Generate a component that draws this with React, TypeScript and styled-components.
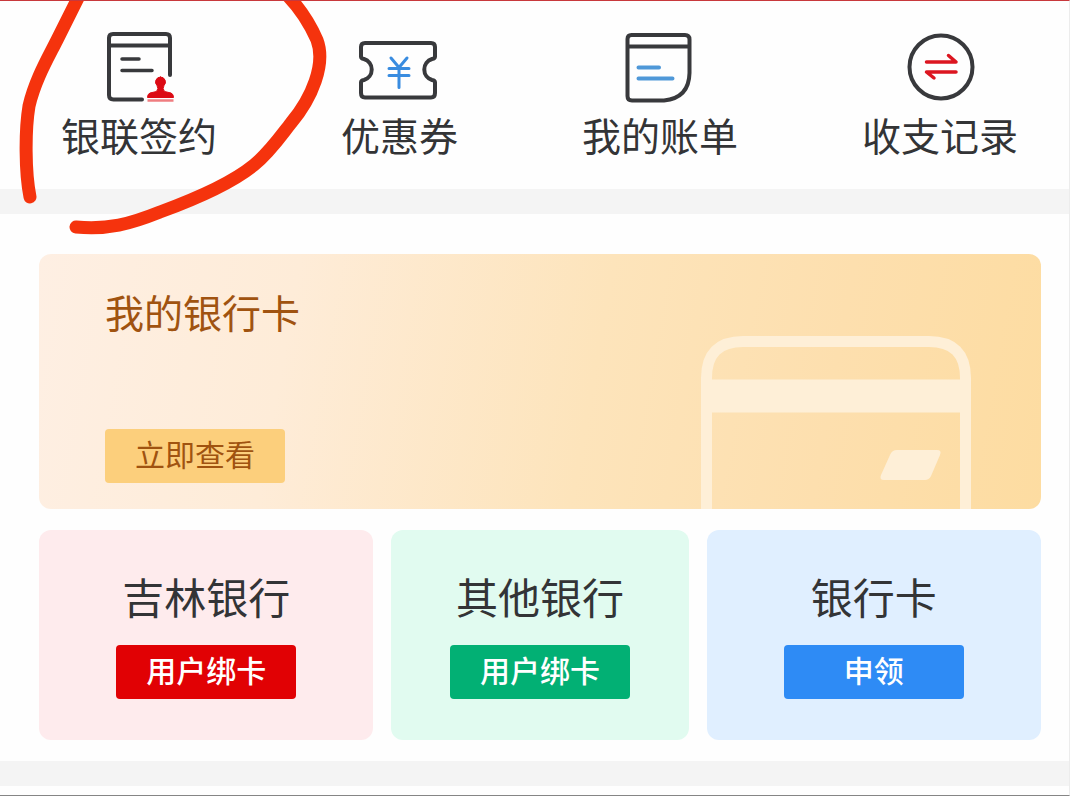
import React from "react";
import styled, { createGlobalStyle } from "styled-components";

const GlobalStyle = createGlobalStyle`
  *, *::before, *::after { box-sizing: border-box; }
  body {
    margin: 0;
    background: #fefefe;
    color: #333436;
    font-family: "Noto Sans CJK SC", sans-serif;
  }
`;

const Page = styled.main`
  position: relative;
  overflow: hidden;
  border-top: 1px solid #c8383c;
  border-right: 1px solid #ececec;
  border-bottom: 1px solid #858585;
  padding-bottom: 9px;
`;

const Shortcuts = styled.nav`
  display: flex;
  justify-content: space-between;
  padding: 29px 51px 32px 61px;
`;

const Shortcut = styled.a`
  display: flex;
  flex-direction: column;
  align-items: center;
  gap: 5px;
  color: inherit;
  text-decoration: none;
  font-size: 39px;
  line-height: 46px;
  white-space: nowrap;
`;

const Icon = styled.svg`
  display: block;
  width: 84px;
  height: 76px;
  fill: none;
  stroke: #38393c;
  stroke-width: 4;
  stroke-linecap: round;
  stroke-linejoin: round;
`;

const Divider = styled.div`
  height: 25px;
  background: #f4f4f4;
`;

const Content = styled.section`
  display: flex;
  flex-direction: column;
  gap: 21px;
  padding: 40px 28px 21px 39px;
`;

const Banner = styled.section`
  position: relative;
  display: flex;
  flex-direction: column;
  align-items: flex-start;
  justify-content: space-between;
  min-height: 255px;
  padding: 33px 66px 26px;
  border-radius: 12px;
  overflow: hidden;
  background: linear-gradient(100deg, #feefe3 0%, #feecd8 25%, #fde4bb 55%, #fddfae 78%, #fddca1 100%);
`;

const BannerTitle = styled.h2`
  margin: 0;
  color: #a05310;
  font-size: 39px;
  font-weight: 400;
  line-height: 48px;
`;

const BankCardArt = styled.svg`
  position: absolute;
  right: 68px;
  bottom: 0;
  width: 274px;
  height: 175px;
`;

const ActionButton = styled.button<{ $bg: string; $color?: string; $weight?: number }>`
  width: 180px;
  height: 54px;
  padding: 0 0 6px;
  border: 0;
  border-radius: 4px;
  background: ${(p) => p.$bg};
  color: ${(p) => p.$color ?? "#ffffff"};
  font-family: inherit;
  font-size: 30px;
  font-weight: ${(p) => p.$weight ?? 500};
  line-height: 48px;
  cursor: pointer;
`;

const Tiles = styled.div`
  display: grid;
  grid-template-columns: 9fr 8fr 9fr;
  gap: 18px;
`;

const Tile = styled.article<{ $bg: string }>`
  display: flex;
  flex-direction: column;
  align-items: center;
  gap: 24px;
  padding: 41px 0;
  border-radius: 12px;
  background: ${(p) => p.$bg};
`;

const TileTitle = styled.h3`
  margin: 0;
  font-size: 42px;
  font-weight: 400;
  line-height: 50px;
`;

const PenMark = styled.svg`
  position: absolute;
  top: -1px;
  left: 0;
  width: 340px;
  height: 245px;
  pointer-events: none;
  fill: none;
  stroke: #f5330d;
  stroke-width: 13;
  stroke-linecap: round;
  stroke-linejoin: round;
`;

const SignIcon = () => (
  <Icon viewBox="0 0 84 76" aria-hidden="true">
    <path d="M73 45V8q0-4-4-4H16q-4 0-4 4v57q0 4.500 4.500 4.500H45M12 15.500h61" />
    <path d="M25 29h17M25 40.500h30" strokeWidth="3.500" />
    <path
      d="M63.500 47a5 5 0 0 1 3.500 8.500q-2 3 .5 6l6.500 1.500q2.500 1 2.500 4.500h-26q0-3.500 2.500-4.500l6.500-1.500q2.500-3 .5-6A5 5 0 0 1 63.500 47z"
      fill="#dc0a14"
      stroke="#dc0a14"
      strokeWidth="1"
    />
    <path d="M50.500 70.500h26" stroke="#ef7d80" strokeWidth="2.500" strokeLinecap="butt" />
  </Icon>
);

const CouponIcon = () => (
  <Icon viewBox="0 0 84 76" aria-hidden="true">
    <path d="M8 13h66q4 0 4 4v9.500q0 2-3 2.500a11 11 0 0 0 0 21q3 .5 3 2.500V63q0 4.500-4 4.500H8q-4 0-4-4.500V52.500q0-2 3-2.500a11 11 0 0 0 0-21q-3-.5-3-2.500V17q0-4 4-4z" />
    <path d="M34 28l8 9.500 8-9.500M42 38v19.500M32 38.500h20M32 45.500h20" stroke="#398ce0" strokeWidth="3" />
  </Icon>
);

const BillIcon = () => (
  <Icon viewBox="0 0 84 76" aria-hidden="true">
    <path d="M13.500 5H67q4.500 0 4.500 4.500V43Q71 68 46 70.500H14q-4.500 0-4.500-4.500V9q0-4 4-4zM9.500 16.500h62" />
    <path d="M20.500 37.500H41M20.500 48.500h34" stroke="#4f98d8" />
  </Icon>
);

const RecordIcon = () => (
  <Icon viewBox="0 0 84 76" aria-hidden="true">
    <circle cx="43" cy="37" r="31.500" />
    <path d="M28.500 32H58l-7.500-6.500M58 42H28.500l7.500 6" stroke="#dc1620" strokeWidth="3.500" />
  </Icon>
);

const shortcuts = [
  { label: "银联签约", Glyph: SignIcon },
  { label: "优惠券", Glyph: CouponIcon },
  { label: "我的账单", Glyph: BillIcon },
  { label: "收支记录", Glyph: RecordIcon },
];

const tiles = [
  { title: "吉林银行", action: "用户绑卡", bg: "#feebed", button: "#e10104" },
  { title: "其他银行", action: "用户绑卡", bg: "#e1fbf0", button: "#02b074" },
  { title: "银行卡", action: "申领", bg: "#e0efff", button: "#2e8bf5" },
];

export default function App() {
  return (
    <>
      <GlobalStyle />
      <Page>
        <Shortcuts>
          {shortcuts.map(({ label, Glyph }) => (
            <Shortcut href="#" key={label}>
              <Glyph />
              <span>{label}</span>
            </Shortcut>
          ))}
        </Shortcuts>
        <Divider />
        <Content>
          <Banner>
            <BankCardArt viewBox="0 0 274 175" aria-hidden="true">
              <g fill="none" stroke="#feefd7">
                <path d="M7.500 176V44Q7.500 7.500 44 7.500H230Q266.500 7.500 266.500 44V176" strokeWidth="11" />
                <path d="M12 62H262" strokeWidth="33" />
              </g>
              <path d="M198 116h40q5 0 3 5l-9 21q-2 4-6 4h-41q-5 0-3-5l9-20q2-5 7-5z" fill="#feefd7" />
            </BankCardArt>
            <BannerTitle>我的银行卡</BannerTitle>
            <ActionButton $bg="#fccf7c" $color="#a05310" $weight={400}>
              立即查看
            </ActionButton>
          </Banner>
          <Tiles>
            {tiles.map((t) => (
              <Tile $bg={t.bg} key={t.title}>
                <TileTitle>{t.title}</TileTitle>
                <ActionButton $bg={t.button}>{t.action}</ActionButton>
              </Tile>
            ))}
          </Tiles>
        </Content>
        <Divider />
        <PenMark viewBox="0 0 340 245" aria-hidden="true">
          <path d="M80-6C74 6 66 22 57 40C48 58 35 80 29 106C25 130 25 172 30 197" />
          <path d="M286-6C300 8 310 24 317 40C326 64 312 98 291 123C280 137 270 152 254 165C232 183 190 201 160 212C130 224 108 230 76 227" />
        </PenMark>
      </Page>
    </>
  );
}
